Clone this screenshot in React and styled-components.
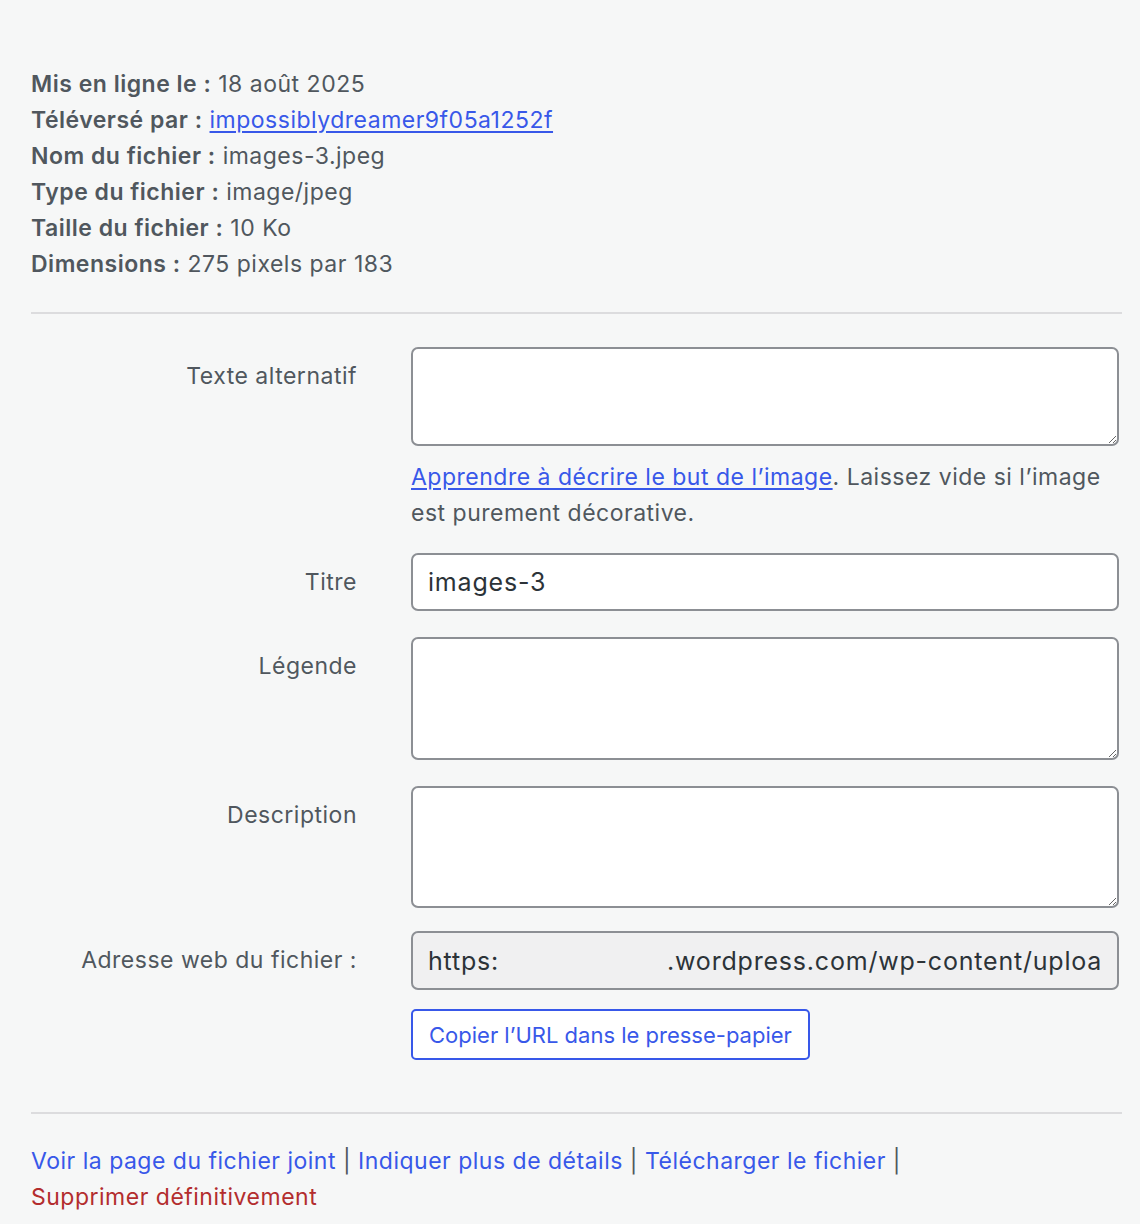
import React from "react";
import styled, { createGlobalStyle } from "styled-components";

const GlobalStyle = createGlobalStyle`
  body {
    margin: 0;
    background: #f6f7f7;
    font-family: Inter, "Noto Sans", "Liberation Sans", sans-serif;
    color: #50575e;
  }
`;

const Page = styled.div`
  padding: 66px 18px 20px 31px;
  font-size: 23px;
  letter-spacing: 0.5px;
  line-height: 36px;
`;

const Meta = styled.div`
  display: flex;
  flex-direction: column;
`;

const MetaLine = styled.div`
  strong {
    font-weight: 600;
  }
`;

const Link = styled.a`
  color: ${(p) => (p.$danger ? "#b32d2e" : "#3858e9")};
  text-decoration: ${(p) => (p.$underline ? "underline" : "none")};
  text-underline-offset: 3px;
  cursor: pointer;
`;

const Divider = styled.hr`
  border: 0;
  height: 2px;
  background: #dcdcde;
  margin: ${(p) => p.$margin};
`;

const Form = styled.div`
  display: grid;
  grid-template-columns: 326px 708px;
  column-gap: 54px;
`;

const Label = styled.label`
  text-align: right;
  padding-top: 11px;
  margin-top: ${(p) => p.$top || "0"};
  margin-bottom: ${(p) => p.$gap || "26px"};
`;

const Field = styled.div`
  display: flex;
  flex-direction: column;
  align-items: flex-start;
  margin-top: ${(p) => p.$top || "0"};
  margin-bottom: ${(p) => p.$gap || "26px"};
`;

const TextArea = styled.textarea`
  box-sizing: border-box;
  width: 100%;
  height: ${(p) => p.$h}px;
  border: 2px solid #8c8f94;
  border-radius: 7px;
  background: #fff;
  font: inherit;
  font-size: 25px;
  padding: 8px 16px;
  display: block;
  outline: none;
`;

const TextInput = styled.input`
  box-sizing: border-box;
  width: 100%;
  height: 58px;
  border: 2px solid #8c8f94;
  border-radius: 7px;
  background: #fff;
  font: inherit;
  font-size: 25px;
  letter-spacing: 0.8px;
  color: #2c3338;
  padding: 0 15px;
  outline: none;
`;

const ReadOnlyUrl = styled.div`
  box-sizing: border-box;
  width: 100%;
  height: 59px;
  border: 2px solid #8c8f94;
  border-radius: 7px;
  background: #f0f0f1;
  font-size: 25px;
  letter-spacing: 0.8px;
  color: #2c3338;
  padding: 0 15px;
  display: flex;
  align-items: center;
`;

const UrlText = styled.span`
  flex: 1;
  min-width: 0;
  white-space: nowrap;
  overflow: hidden;
`;

const UrlGap = styled.span`
  display: inline-block;
  width: 168px;
`;

const Help = styled.p`
  margin: 13px 0 0;
`;

const CopyButton = styled.button`
  margin-top: 19px;
  height: 51px;
  padding: 0 16px;
  border: 2px solid #3858e9;
  border-radius: 5px;
  background: #fff;
  color: #3858e9;
  font: inherit;
  font-size: 22px;
  letter-spacing: 0;
  cursor: pointer;
`;

const Actions = styled.div`
  line-height: 36px;
`;

const Sep = styled.span`
  color: #50575e;
`;

export default function App() {
  return (
    <>
      <GlobalStyle />
      <Page>
        <Meta>
          <MetaLine><strong>Mis en ligne le :</strong> 18 août 2025</MetaLine>
          <MetaLine>
            <strong>Téléversé par :</strong>{" "}
            <Link $underline>impossiblydreamer9f05a1252f</Link>
          </MetaLine>
          <MetaLine><strong>Nom du fichier :</strong> images-3.jpeg</MetaLine>
          <MetaLine><strong>Type du fichier :</strong> image/jpeg</MetaLine>
          <MetaLine><strong>Taille du fichier :</strong> 10 Ko</MetaLine>
          <MetaLine><strong>Dimensions :</strong> 275 pixels par 183</MetaLine>
        </Meta>

        <Divider $margin="30px 0 33px" />

        <Form>
          <Label $gap="22px">Texte alternatif</Label>
          <Field $gap="22px">
            <TextArea $h={99} />
            <Help>
              <Link $underline>Apprendre à décrire le but de l’image</Link>. Laissez vide si l’image est purement décorative.
            </Help>
          </Field>

          <Label>Titre</Label>
          <Field>
            <TextInput defaultValue="images-3" />
          </Field>

          <Label>Légende</Label>
          <Field>
            <TextArea $h={123} />
          </Field>

          <Label>Description</Label>
          <Field $gap="0">
            <TextArea $h={122} />
          </Field>

          <Label $top="23px" $gap="0">Adresse web du fichier :</Label>
          <Field $top="23px" $gap="0">
            <ReadOnlyUrl>
              <UrlText>
                https:<UrlGap />.wordpress.com/wp-content/uploads/2025/08/images-3.jpeg
              </UrlText>
            </ReadOnlyUrl>
            <CopyButton>Copier l’URL dans le presse-papier</CopyButton>
          </Field>
        </Form>

        <Divider $margin="52px 0 29px" />

        <Actions>
          <Link>Voir la page du fichier joint</Link> <Sep>|</Sep>{" "}
          <Link>Indiquer plus de détails</Link> <Sep>|</Sep>{" "}
          <Link>Télécharger le fichier</Link> <Sep>|</Sep>
          <br />
          <Link $danger>Supprimer définitivement</Link>
        </Actions>
      </Page>
    </>
  );
}
